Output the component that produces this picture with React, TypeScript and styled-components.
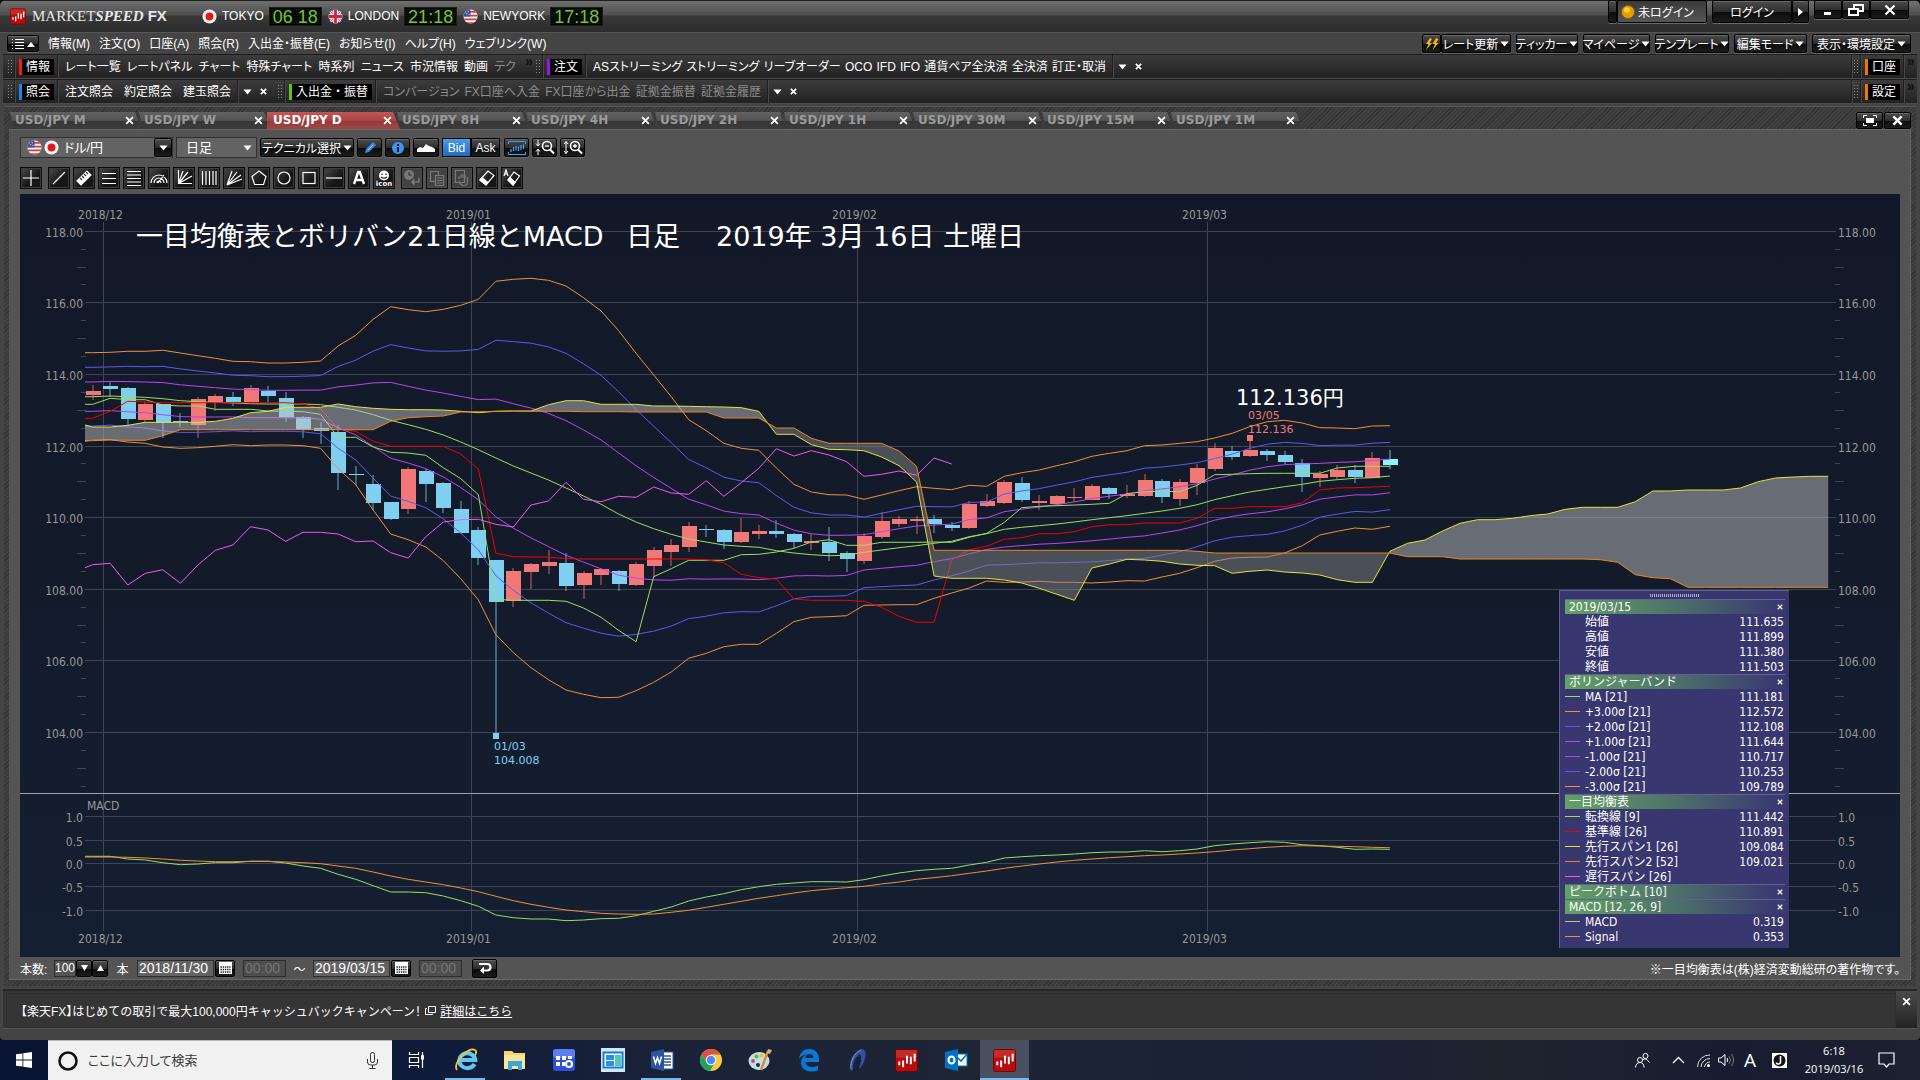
import React from "react";
import styled, { createGlobalStyle, css } from "styled-components";

const uiFont = `"Liberation Sans", "Noto Sans CJK JP", sans-serif`;
const chartFont = `"DejaVu Sans Condensed", "DejaVu Sans", "Noto Sans CJK JP", sans-serif`;
const titleFont = `"DejaVu Sans", "Noto Sans CJK JP", sans-serif`;

const GlobalStyle = createGlobalStyle`
  * { box-sizing: border-box; }
  html, body { margin: 0; padding: 0; background: #000; }
  body, button, input, select { font-family: ${uiFont}; font-size: 12px; color: #fff; }
  body { font-feature-settings: "palt"; }
  button, input, select { font-feature-settings: inherit; margin: 0; padding: 0; }
  svg { display: block; flex: none; }
`;

/* ---------- shared parts ---------- */

const hatch = css`
  background: repeating-linear-gradient(135deg, #343434 0 1px, #404040 1px 3px);
`;

const gloss = css`
  border: 1px solid #000;
  border-radius: 2px;
  background: linear-gradient(#4c4c4c 0, #2e2e2e 50%, #0c0c0c 54%, #1c1c1c 100%);
  box-shadow: 0 1px 0 #6a6a6a, inset 0 1px 0 #686868;
  color: #fff;
`;

const GlossButton = styled.button<{ $w?: number; $h?: number }>`
  ${gloss}
  display: flex;
  align-items: center;
  justify-content: center;
  gap: 2px;
  height: ${(p) => p.$h ?? 19}px;
  width: ${(p) => (p.$w ? `${p.$w}px` : "auto")};
  white-space: nowrap;
  flex: none;
`;

const PlainButton = styled.button<{ $dim?: boolean }>`
  border: 0;
  background: none;
  color: ${(p) => (p.$dim ? "#8e8e8e" : "#fff")};
  white-space: nowrap;
  line-height: 16px;
  flex: none;
`;

const Down = ({ c = "#fff" }: { c?: string }) => (
  <svg width="9" height="6" viewBox="0 0 9 6"><path d="M0.5 0.5h8L4.500 5.500z" fill={c} /></svg>
);
const Cross = ({ s = 8, w = 2 }: { s?: number; w?: number }) => (
  <svg width={s} height={s} viewBox="0 0 8 8"><path d="M1 1l6 6M7 1l-6 6" stroke="#fff" strokeWidth={w} /></svg>
);

const JapanFlag = ({ s = 15 }: { s?: number }) => (
  <svg width={s} height={s} viewBox="0 0 16 16">
    <circle cx="8" cy="8" r="7.500" fill="#f1f1f1" />
    <circle cx="8" cy="8" r="4.200" fill="#dc1c1c" />
  </svg>
);
const UkFlag = () => (
  <svg width="15" height="15" viewBox="0 0 16 16">
    <clipPath id="uk"><circle cx="8" cy="8" r="7.500" /></clipPath>
    <g clipPath="url(#uk)">
      <rect width="16" height="16" fill="#3a4d9a" />
      <path d="M0 0l16 16M16 0L0 16" stroke="#fff" strokeWidth="3" />
      <path d="M0 0l16 16M16 0L0 16" stroke="#d13444" strokeWidth="1" />
      <path d="M8 0v16M0 8h16" stroke="#fff" strokeWidth="5" />
      <path d="M8 0v16M0 8h16" stroke="#cf2334" strokeWidth="3" />
    </g>
  </svg>
);
const UsFlag = ({ s = 15 }: { s?: number }) => (
  <svg width={s} height={s} viewBox="0 0 16 16">
    <clipPath id="us"><circle cx="8" cy="8" r="7.500" /></clipPath>
    <g clipPath="url(#us)">
      <rect width="16" height="16" fill="#f2f2f2" />
      <path d="M0 3h16M0 7h16M0 11h16M0 15h16" stroke="#d0404a" strokeWidth="2" />
      <rect width="8" height="8" fill="#3a549c" />
      <path d="M2 3h1M5 3h1M3.500 5h1M6 6h1" stroke="#fff" strokeWidth="1" />
    </g>
  </svg>
);
const ChartLogo = ({ w = 16, h = 16 }: { w?: number; h?: number }) => (
  <svg width={w} height={h} viewBox="0 0 24 24">
    <rect x="0.500" y="0.500" width="23" height="23" rx="2" fill="#b50d0d" stroke="#6b0505" />
    <rect x="1" y="1" width="22" height="8" rx="1" fill="#c62a26" />
    <path d="M4.500 13v4M8.500 12v7M12.500 7v8M16.500 8v8M20.500 5v8" stroke="#fff" strokeWidth="2" />
  </svg>
);

/* ---------- application frame ---------- */

const Page = styled.div`
  display: flex;
  flex-direction: column;
  min-height: 100vh;
`;
const AppWindow = styled.div`
  display: flex;
  flex-direction: column;
  flex: 1;
  background: #444;
  border-radius: 6px 6px 4px 4px;
  overflow: hidden;
`;
const TitleBar = styled.header`
  display: flex;
  align-items: flex-start;
  justify-content: space-between;
  height: 32px;
  padding: 0 11px 0 10px;
  background: linear-gradient(#1e1e1e 0 1px, #707070 1px, #4e4e4e 15px, #383838 16px, #2c2c2c 32px);
`;
const Brand = styled.div`
  display: flex;
  align-items: center;
  height: 32px;
  gap: 6px;
`;
const BrandName = styled.h1`
  margin: 0 26px 0 0;
  width: 138px;
  font: 15px "Liberation Serif", serif;
  color: #e8e8e8;
  white-space: nowrap;
  i { font-weight: bold; }
  b { font-family: "Liberation Sans", sans-serif; margin-left: 4px; }
`;
const City = styled.span`
  display: flex;
  align-items: center;
  gap: 5px;
`;
const Clock = styled.time`
  width: 53px;
  height: 19px;
  font-size: 18px;
  line-height: 18px;
  text-align: center;
  color: #74c43c;
  white-space: pre;
  border: 1px solid #1b1b1b;
  background: repeating-linear-gradient(#000 0 1px, #0d150a 1px 2px);
`;
const TitleActions = styled.div`
  display: flex;
  align-items: flex-start;
`;
const Split = styled.div<{ $ml?: number }>`
  display: flex;
  margin-left: ${(p) => p.$ml ?? 0}px;
`;
const StatusButton = styled(GlossButton)`
  background: linear-gradient(#3a3a3a, #555);
  box-shadow: 0 1px 0 #6a6a6a;
  gap: 3px;
  justify-content: flex-start;
  padding-left: 3px;
`;

const MenuBar = styled.nav`
  display: flex;
  align-items: center;
  justify-content: space-between;
  height: 22px;
  padding: 0 9px 0 7px;
  background: #444;
  border-top: 1px solid #555;
`;
const MenuGroup = styled.div<{ $gap: number }>`
  display: flex;
  align-items: center;
  gap: ${(p) => p.$gap}px;
`;

const ToolbarRow = styled.div`
  display: flex;
  align-items: center;
  height: 25px;
  margin: 0 3px;
  padding-left: 4px;
  border-top: 1px solid #1c1c1c;
  border-bottom: 1px solid #4a4a4a;
  background: linear-gradient(#3c3c3c, #222);
`;
const Grip = styled.span`
  width: 6px;
  height: 15px;
  margin-right: 2px;
  background: radial-gradient(circle, #8a8a8a 1px, transparent 1px) 0 0 / 3px 3px;
`;
const Category = styled.button<{ $c: string }>`
  height: 16px;
  margin: 0 4px 0 3px;
  padding: 0 4px;
  border: 0;
  border-left: 3px solid ${(p) => p.$c};
  background: #000;
  font-feature-settings: normal;
  line-height: 16px;
  white-space: nowrap;
`;
const Rule = styled.span`
  width: 1px;
  height: 23px;
  background: #484848;
  box-shadow: -1px 0 0 #1e1e1e;
  flex: none;
`;
const ToolLinks = styled.div<{ $w: number }>`
  display: flex;
  justify-content: space-between;
  width: ${(p) => p.$w}px;
  margin: 0 7px 0 6px;
`;
const More = styled.button`
  align-self: flex-start;
  border: 0;
  background: none;
  color: #111;
  font-size: 14px;
  font-weight: bold;
  line-height: 12px;
  width: 12px;
`;
const RowEnd = styled.div`
  display: flex;
  align-items: center;
  margin-left: auto;
`;
const Closer = styled.div`
  display: flex;
  align-items: center;
  gap: 8px;
  padding: 0 10px 0 4px;
`;
const IconOnly = styled.button`
  display: flex;
  align-items: center;
  justify-content: center;
  border: 0;
  background: none;
`;

const Workspace = styled.main`
  display: flex;
  flex-direction: column;
  flex: 1;
  margin: 2px 4px 0;
  padding: 5px 5px 6px;
  border-top: 1px solid #585858;
  ${hatch}
`;
const TabStrip = styled.div`
  display: flex;
  height: 17px;
`;
const Tab = styled.div<{ $active?: boolean }>`
  display: flex;
  align-items: center;
  justify-content: space-between;
  width: 133px;
  margin-right: -4px;
  padding: 0 8px 0 6px;
  z-index: ${(p) => (p.$active ? 1 : 0)};
  color: ${(p) => (p.$active ? "#fff" : "#9a9a9a")};
  background: ${(p) =>
    p.$active
      ? "linear-gradient(#c45656, #a94444 50%, #913a3a 52%, #a04848)"
      : "linear-gradient(#626262, #505050 52%, #363636 54%, #3c3c3c)"};
  clip-path: ${(p) =>
    p.$active
      ? "polygon(0 0, calc(100% - 7px) 0, 100% 100%, 0 100%)"
      : "polygon(1px 0, calc(100% - 7px) 0, calc(100% - 1px) 100%, 5px 100%)"};
`;
const TabName = styled.button`
  border: 0;
  background: none;
  color: inherit;
  font: bold 12px "DejaVu Sans", sans-serif;
  line-height: 17px;
  white-space: nowrap;
`;
const TabActions = styled.div`
  display: flex;
  gap: 1px;
  margin-left: auto;
`;

const Panel = styled.section`
  display: flex;
  flex-direction: column;
  flex: 1;
  padding: 7px 10px 0 11px;
  background: #545454;
  border: 1px solid #686868;
  border-width: 1px 1px 1px 0;
`;
const ControlRow = styled.div`
  display: flex;
  align-items: center;
  gap: 3px;
  height: 21px;
`;
const Combo = styled.label<{ $w: number }>`
  display: flex;
  align-items: center;
  width: ${(p) => p.$w}px;
  height: 21px;
  padding-left: 6px;
  gap: 2px;
  border: 1px solid #303030;
  background: #636363;
`;
const Select = styled.select`
  appearance: none;
  flex: 1;
  min-width: 0;
  padding-left: 3px;
  border: 0;
  background: transparent;
  font-size: 13px;
`;
const ArrowBox = styled.span<{ $solid?: boolean }>`
  display: flex;
  align-items: center;
  justify-content: center;
  width: 18px;
  height: 19px;
  pointer-events: none;
  ${(p) => p.$solid && gloss}
`;
const Toggle = styled.div`
  display: flex;
  margin-right: 1px;
`;
const ToggleButton = styled(GlossButton)<{ $on?: boolean }>`
  border-radius: 0;
  ${(p) => p.$on && css`background: linear-gradient(#4a9ae8, #1c6cc4); box-shadow: 0 1px 0 #6a6a6a;`}
`;
const ToolRow = styled.div`
  display: flex;
  gap: 3px;
  height: 22px;
  margin: 9px 0 5px;
`;
const ToolButton = styled.button<{ $gap?: boolean; $off?: boolean }>`
  display: flex;
  align-items: center;
  justify-content: center;
  width: 22px;
  height: 22px;
  margin-right: ${(p) => (p.$gap ? 3 : 0)}px;
  border: 1px solid #0a0a0a;
  background: ${(p) => (p.$off ? "#424242" : "linear-gradient(135deg, #4a4a4a, #161616 60%)")};
  box-shadow: inset 0 0 0 1px ${(p) => (p.$off ? "#4c4c4c" : "#3c3c3c")};
`;

const ChartArea = styled.div`
  position: relative;
  flex: 1;
  background: linear-gradient(#121827, #131b2b 50%, #141f31);
`;
const ChartSvg = styled.svg`
  width: 100%;
  height: auto;
`;
const FooterRow = styled.div`
  display: flex;
  align-items: center;
  height: 22px;
  color: #fff;
`;
const Field = styled.input<{ $w: number; $off?: boolean; $mr?: number }>`
  width: ${(p) => p.$w}px;
  height: 17px;
  margin-right: ${(p) => p.$mr ?? 0}px;
  padding: 0 1px;
  border: 1px solid #2e2e2e;
  background: ${(p) => (p.$off ? "#4e4e4e" : "#626262")};
  color: ${(p) => (p.$off ? "#757575" : "#fff")};
  font-size: 14px;
`;
const CountField = styled(Field)`
  padding: 0;
  font-size: 12px;
  background: #545454;
`;
const Note = styled.p`
  margin: 0 0 0 auto;
  white-space: nowrap;
`;
const Gap = styled.span<{ $w: number }>`
  display: flex;
  justify-content: center;
  width: ${(p) => p.$w}px;
`;
const CountLabel = styled.label`
  width: 34px;
`;

const NewsBar = styled.footer`
  display: flex;
  height: 40px;
  margin: 3px 3px 11px;
  border-top: 2px solid #262626;
  border-bottom: 1px solid #555;
  background: #353535;
`;
const NewsText = styled.p`
  display: flex;
  align-items: center;
  flex: 1;
  margin: 2px 0 0 3px;
  padding: 0 14px;
  gap: 4px;
  border: 1px solid #303030;
  font-feature-settings: "halt";
  a { color: #fff; }
`;
const NewsClose = styled.div`
  width: 21px;
  padding: 6px 0 0 6px;
  background: linear-gradient(#4a4a4a, #222);
`;

/* ---------- chart data ---------- */

const BAR0 = 92.7;
const STEP = 17.53;
const bx = (i: number) => +(BAR0 + STEP * i).toFixed(1);
const priceY = (p: number) => Math.round(446.5 + (112 - p) * 35.8) - 0.5;
const macdY = (m: number) => Math.round(864 - m * 46.7) - 0.5;
/* stored points count thirds of a pixel below the top of each plot */
const mainY = (v: number) => 190 + v / 3;
const subY = (v: number) => 540 + v / 3;

/* u = up, d = down, n = newest; then high, body top, body bottom, low */
const candles = `u385,391,395,400 d381,386,389,397 d387,388,419,425 u402,404,420,422 d404,404,423,438 d413,421,422,427
u397,399,425,438 u394,396,402,411 d392,397,402,406 u385,388,402,402 d386,391,396,402 d392,398,417,422 d416,417,430,438
d422,428,431,444 d425,432,473,490 d466,474,475,485 d475,484,503,510 d502,502,519,520 u467,469,509,514 d469,471,484,502
d482,483,508,513 d501,509,533,534 d527,530,558,565 d560,560,602,735 u568,571,601,607 u563,564,572,589 u550,562,566,574
d553,563,586,591 u571,573,585,599 u568,569,575,585 d570,571,584,591 u562,564,585,586 u547,550,566,577 u539,545,552,566
u522,526,547,552 d525,529,530,537 d529,530,542,549 u518,532,542,543 u525,531,534,539 d520,531,534,538 d533,534,542,548
u534,541,543,550 d527,542,553,561 d551,553,559,572 u533,536,561,564 u512,521,537,539 u516,519,524,527 u516,519,521,534
d515,519,524,533 d522,525,528,531 u501,504,528,529 u494,501,506,507 u480,482,503,504 d477,483,500,502 u495,501,503,510
u495,496,504,505 u488,497,498,502 u484,486,500,500 d487,488,494,499 u485,494,496,498 u474,480,496,497 d479,481,497,503
u479,482,499,506 u464,468,483,495 u443,448,469,471 d446,451,457,460 u438,450,456,457 d449,451,455,461 d451,455,462,464
d459,463,477,492 u471,474,478,487 u465,470,477,479 d465,470,477,483 u452,458,478,478 n450,459,465,469`
  .split(/\s+/)
  .map((s) => ({ kind: s[0], v: s.slice(1).split(",").map(Number) }));
const candleColor: Record<string, string> = { u: "#f27878", d: "#7fd0f0", n: "#8af8fa" };

/* "v*n" repeats a value n times */
const series = (s: string) =>
  s.trim().split(/\s+/).flatMap((t) => {
    const [v, n] = t.split("*").map(Number);
    return Array<number>(n || 1).fill(v);
  });

const upper3 = series(`488 487 484 484 481 489 497 505 514 515 519 519 517 513 468 436 388 350 359 365 358 346 328 274 268 265
271 288 323 363 422 490 555 620 689 722 760 775 781 834 883 906 914 915 928 915 902 890 895 899 886 889 859 848 840 827 815
799 790 782 767 765 760 755 744 730 710 695 691 699 713 714 716 708 707`);
const ma21 = series(`620 618 620 622 626 632 635 637 639 641 642 642 642 644 652 660 674 691 704 718 735 756 779 804 828 849
870 894 918 943 972 996 1016 1033 1047 1056 1065 1069 1072 1082 1089 1094 1097 1096 1087 1080 1073 1067 1060 1054 1040 1031
1018 1012 1007 1002 996 989 983 977 970 963 955 944 929 917 906 898 890 883 874 869 865 863 858`);
const band = (k: number) => ma21.map((m, i) => m + ((upper3[i] - m) * k) / 3);

const tenkan = series(`643 625 629 629 645 648 648 658 658 658 663 664 665 673 742 742 771 787 789 796 833 866 914 1228 1231 1231
1231 1234 1254 1282 1321 1355 1160 1136 1111 1111 1111 1094 1093 1086 1075 1056 1049 1066 1066 1057 1057 1057 1056 1057 1042
1030 997 953 949 947 945 943 940 911 905 904 905 886 854 853 851 850 850 850 850 834 829 829 829`);
const kijun = series(`685 664 634 636 638*8 642 656 717 724 754 769 769 769 769 792 838 1090 1100 1101 1101 1106 1107*7 1109
1118 1153 1163 1167 1227 1231 1231 1231 1234 1252 1279 1297 1297 1110 1079 1069 1048 1043 1031 1031 1025 1010 1004 1004 999
999 999 985 955 955 950 950 950 938 900 894 893 891 889`);
const chikou = series(`1124 1120 1185 1150 1139 1180 1125 1081 1065 1010 1020 1054 1027 1027 1032 1055 1053 1088 1104 1040 996
989 988 1003 1011 945 933 877 928 935 919 922 891 909 913 872 919 878 835 776 798 782 795 815 859 853 843 856 804 822`);
const span1 = series(`711 711 706 697 697 697 697 694 685 668 664 652 652 652 642 650 655 658 659 659 660 664 668 664 663 663
644 632 632 643 643 643 648 648 649 650 651 653 664 733 733 764 778 779 782 801 827 876 1158 1165 1165 1165 1170 1179 1195
1213 1231 1134 1122 1108 1110 1114 1122 1126 1127 1150 1144 1140 1146 1149 1155 1169 1177 1177 1084 1060 1050 1023 1000 989
989 985 977 972 958 952 952 952 935 903 903 900 900 900 894 875 864 861 859 859`);
const span2 = series(`750 750 751 751 737 719*12 694 683 680 678 666 665 664 663 664*3 665*3 666*5 684 684 684 714 714 745
760*4 783 829 1081*15 1084 1089*11 1100*3 1107*8 1109 1117 1154 1163 1166 1192*9`);

const macd = series(`949 949 957 960 968 974 972 968 968 964 964 969 978 985 1003 1018 1037 1056 1056 1058 1068 1082 1099 1125
1133 1137 1137 1142 1140 1136 1135 1127 1114 1101 1083 1071 1061 1049 1040 1033 1029 1025 1025 1026 1019 1008 999 992 988 985
975 967 954 950 947 945 942 938 936 936 932 935 932 927 917 912 908 905 907 914 917 922 928 927 928`);
const signal = series(`951 951 952 954 957 961 963 965 965 964 964 966 968 971 978 985 996 1008 1018 1026 1034 1044 1055 1069
1082 1093 1102 1110 1115 1120 1122 1123 1122 1117 1111 1102 1093 1084 1075 1067 1059 1052 1047 1043 1039 1032 1026 1018 1013
1007 1000 993 985 978 972 966 961 957 953 950 947 945 942 939 935 930 926 922 919 917 918 919 920 922 923`);

const toPoints = (s: number[], y: (v: number) => number, lead = s[0]) =>
  [`85,${y(lead).toFixed(1)}`, ...s.map((v, i) => `${bx(i)},${y(v).toFixed(1)}`)].join(" ");
const cloud = (from: number, to: number) => {
  const idx = Array.from({ length: to - from + 1 }, (_, k) => from + k);
  const p = (i: number, s: number[]) => `${bx(i)},${mainY(s[i]).toFixed(1)}`;
  return [...idx.map((i) => p(i, span1)), ...idx.reverse().map((i) => p(i, span2))];
};
const crossing = `${bx(38.5)},${mainY(699).toFixed(1)}`;

const c = {
  green: "#9ade62", orange: "#f09038", blue: "#5a5af0", purple: "#b846f0",
  red: "#f00000", yellow: "#e2e23c", span: "#e8861e", pink: "#ee5aee",
};
const Line = styled.polyline<{ $c: string }>`
  fill: none;
  stroke: ${(p) => p.$c};
  stroke-width: 1;
`;
const AxisText = styled.text`
  font: 12px ${chartFont};
  fill: #989898;
`;
const Mark = styled.text<{ $c: string }>`
  font: 11px "DejaVu Sans", sans-serif;
  fill: ${(p) => p.$c};
`;
const Headline = styled.text<{ $s: number }>`
  font: ${(p) => p.$s}px ${titleFont};
  fill: #fff;
  font-feature-settings: normal;
`;

const months = [
  { x: 103.5, label: "2018/12" },
  { x: 471.5, label: "2019/01" },
  { x: 857.5, label: "2019/02" },
  { x: 1207.5, label: "2019/03" },
];
const prices = [118, 116, 114, 112, 110, 108, 106, 104];
const ticks = Array.from({ length: 31 }, (_, i) => 117.5 - i * 0.5).filter((p) => p % 2 !== 0);
const levels = [1, 0.5, 0, -0.5, -1];

function PriceChart() {
  return (
    <ChartSvg viewBox="20 194 1880 763" role="img" aria-label="USD/JPY">
      <g stroke="#3e4454" strokeWidth="1">
        {prices.map((p) => <line key={p} x1="85" x2="1836" y1={priceY(p)} y2={priceY(p)} />)}
        {levels.map((m) => <line key={m} x1="85" x2="1836" y1={macdY(m)} y2={macdY(m)} />)}
        {months.map((m) => <line key={m.x} x1={m.x} x2={m.x} y1="222" y2="931" />)}
        {ticks.map((p) => {
          const len = p % 1 === 0 ? 9 : 5;
          return <path key={p} d={`M${86 - len} ${priceY(p)}h${len}M1835 ${priceY(p)}h${len}`} />;
        })}
      </g>
      <line x1="20" x2="1900" y1="793.5" y2="793.5" stroke="#a0a0a6" />
      {prices.map((p) => (
        <g key={p}>
          <AxisText x="83" y={priceY(p) + 5} textAnchor="end">{p.toFixed(2)}</AxisText>
          <AxisText x="1838" y={priceY(p) + 5}>{p.toFixed(2)}</AxisText>
        </g>
      ))}
      {levels.map((m) => (
        <g key={m}>
          <AxisText x="83" y={macdY(m) + 5} textAnchor="end">{m.toFixed(1)}</AxisText>
          <AxisText x="1838" y={macdY(m) + 5}>{m.toFixed(1)}</AxisText>
        </g>
      ))}
      <AxisText x="87" y="810">MACD</AxisText>
      {months.map((m) => (
        <g key={m.x}>
          <AxisText x={m.x - 3} y="219" textAnchor="middle">{m.label}</AxisText>
          <AxisText x={m.x - 3} y="943" textAnchor="middle">{m.label}</AxisText>
        </g>
      ))}

      {candles.map(({ kind, v: [h, t, b, l] }, i) => (
        <g key={i} fill={candleColor[kind]}>
          <rect x={Math.round(bx(i)) - 0.5} y={h} width="1" height={l - h} opacity="0.8" />
          <rect x={Math.round(bx(i)) - 7} y={t} width="15" height={Math.max(b - t, 1)} />
        </g>
      ))}
      <rect x="493" y="733" width="6" height="6" fill={candleColor.d} />
      <rect x="1247" y="435" width="6" height="6" fill={candleColor.u} />

      <Line $c={c.green} points={toPoints(ma21, mainY)} />
      {[3, -3].map((k) => <Line key={k} $c={c.orange} points={toPoints(band(k), mainY)} />)}
      {[2, -2].map((k) => <Line key={k} $c={c.blue} points={toPoints(band(k), mainY)} />)}
      {[1, -1].map((k) => <Line key={k} $c={c.purple} points={toPoints(band(k), mainY)} />)}
      <Line $c={c.green} points={toPoints(tenkan, mainY)} />
      <Line $c={c.red} points={toPoints(kijun, mainY)} />

      <polygon points={[`85,${mainY(705)}`, ...cloud(0, 38).slice(0, 39), crossing, ...cloud(0, 38).slice(39), `85,${mainY(754)}`].join(" ")} fill="rgba(190,190,190,0.5)" />
      <polygon points={[crossing, ...cloud(39, 74)].join(" ")} fill="rgba(132,132,132,0.5)" />
      <polygon points={cloud(74, 99).join(" ")} fill="rgba(190,190,190,0.5)" />
      <Line $c={c.yellow} points={toPoints(span1, mainY, 705)} />
      <Line $c={c.span} points={toPoints(span2, mainY, 754)} />
      <Line $c={c.pink} points={toPoints(chikou, mainY, 1133)} />

      <Line $c={c.green} points={toPoints(macd, subY)} />
      <Line $c={c.orange} points={toPoints(signal, subY)} />

      <Mark $c={candleColor.d} x="494" y="750">01/03</Mark>
      <Mark $c={candleColor.d} x="494" y="764">104.008</Mark>
      <Mark $c={candleColor.u} x="1248" y="419">03/05</Mark>
      <Mark $c={candleColor.u} x="1248" y="433">112.136</Mark>
      <Headline $s={27} x="136" y="246">一目均衡表とボリバン21日線とMACD</Headline>
      <Headline $s={27} x="626" y="246">日足</Headline>
      <Headline $s={27} x="716" y="246">2019年 3月 16日 土曜日</Headline>
      <Headline $s={21} x="1236" y="405">112.136円</Headline>
    </ChartSvg>
  );
}

/* ---------- value window over the chart ---------- */

const ValueBox = styled.aside`
  position: absolute;
  right: 111px;
  bottom: 9px;
  width: 230px;
  padding: 7px 4px 4px 5px;
  border: 1px solid #5e5c94;
  border-width: 1px 0 0 1px;
  background: rgba(58, 56, 114, 0.97);
`;
const Handle = styled.div`
  width: 50px;
  height: 3px;
  margin: -4px auto 2px;
  background: repeating-linear-gradient(90deg, #b0b0cc 0 1px, transparent 1px 2px);
`;
const ValueTable = styled.table`
  width: 100%;
  border-collapse: collapse;
  font: 12px ${chartFont};
  color: #fff;
  tr { height: 15px; }
  td, th { padding: 0; line-height: 14px; height: 15px; white-space: nowrap; font-weight: normal; text-align: left; }
`;
const HeadRow = styled.tr`
  background: linear-gradient(90deg, #62a264, #4f7768 45%, #3a3a72 95%);
  box-shadow: inset 0 1px 0 #626090;
  && th { padding-left: 4px; }
`;
const CloseSection = styled(IconOnly)`
  margin: 0 1px 0 auto;
`;
const SwatchCell = styled.td<{ $c: string }>`
  width: 15px;
  background: linear-gradient(${(p) => p.$c}, ${(p) => p.$c}) 0 7px / 15px 1px no-repeat;
`;
const NameCell = styled.td`
  && { padding-left: 5px; }
`;
const NumberCell = styled.td`
  && { text-align: right; padding-right: 1px; }
`;

type Row = [string, string, string];
const groups: { title: string; rows: Row[] }[] = [
  { title: "2019/03/15", rows: [["", "始値", "111.635"], ["", "高値", "111.899"], ["", "安値", "111.380"], ["", "終値", "111.503"]] },
  {
    title: "ボリンジャーバンド",
    rows: [
      [c.green, "MA [21]", "111.181"], [c.orange, "+3.00σ [21]", "112.572"], [c.blue, "+2.00σ [21]", "112.108"],
      [c.purple, "+1.00σ [21]", "111.644"], [c.purple, "-1.00σ [21]", "110.717"], [c.blue, "-2.00σ [21]", "110.253"],
      [c.orange, "-3.00σ [21]", "109.789"],
    ],
  },
  {
    title: "一目均衡表",
    rows: [
      [c.green, "転換線 [9]", "111.442"], [c.red, "基準線 [26]", "110.891"], [c.yellow, "先行スパン1 [26]", "109.084"],
      [c.span, "先行スパン2 [52]", "109.021"], [c.pink, "遅行スパン [26]", ""],
    ],
  },
  { title: "ピークボトム [10]", rows: [] },
  { title: "MACD [12, 26, 9]", rows: [[c.green, "MACD", "0.319"], [c.orange, "Signal", "0.353"]] },
];

function Values() {
  return (
    <ValueBox>
      <Handle />
      <ValueTable>
        {groups.map((g) => (
          <tbody key={g.title}>
            <HeadRow>
              <th colSpan={2}>{g.title}</th>
              <NumberCell><CloseSection aria-label="閉じる"><Cross s={6} w={1.6} /></CloseSection></NumberCell>
            </HeadRow>
            {g.rows.map(([color, name, value]) => (
              <tr key={name}>
                <SwatchCell $c={color || "transparent"} />
                <NameCell>{name}</NameCell>
                <NumberCell>{value}</NumberCell>
              </tr>
            ))}
          </tbody>
        ))}
      </ValueTable>
    </ValueBox>
  );
}

/* ---------- drawing tools ---------- */

const toolIcons: [string, React.ReactNode][] = [
  ["十字", <path d="M9 1v16M1 9h16" />],
  ["直線", <path d="M3 15L15 3" />],
  ["定規", <g><path d="M2 12L12 2l4 4L6 16z" fill="#fff" /><path d="M5 9l2 2M7 7l2 2M9 5l2 2M11 3l2 2" stroke="#333" /></g>],
  ["三本線", <path d="M2 4.500h14M2 9.500h14M2 14.500h14" />],
  ["五本線", <path d="M2 2.500h14M2 6h14M2 9.500h14M2 13h14M2 16.500h14" />],
  ["円弧", <path d="M1 14a8 8 0 0 1 16 0M4 14a5 5 0 0 1 10 0M7 14a2 2 0 0 1 4 0M8 14l6-8" />],
  ["ファン", <path d="M3.500 1v13.500H17M3.500 14.500L8 2M3.500 14.500L13 3M3.500 14.500L17 7" />],
  ["縦線", <path d="M2.500 2v14M6 2v14M9.500 2v14M13 2v14M16 2v14" />],
  ["放射", <path d="M2 16L7 2M2 16L12 3M2 16L16 6M2 16L17 10" />],
  ["五角形", <path d="M9 2l7 5.500-2.500 8h-9L2 7.500z" />],
  ["円", <circle cx="9" cy="9" r="6" />],
  ["四角", <rect x="3" y="3.500" width="12" height="11" />],
  ["水平線", <path d="M1 9h16" />],
  ["文字", <path d="M4 15L8.200 3h1.600L14 15M5.500 11h7" strokeWidth="2.400" />],
  ["アイコン", <g><circle cx="9" cy="5.500" r="5" fill="#fff" stroke="none" /><path d="M7 3.500v1.500M11 3.500v1.500M6 7q3 2.500 6 0" stroke="#222" /></g>],
  ["履歴", <g><circle cx="6" cy="6" r="5" fill="#777" stroke="none" /><path d="M6 3v3h3" stroke="#3a3a3a" /><path d="M16 9v4H9M11.500 10.500L9 13l2.500 2.500" stroke="#888" /></g>],
  ["複写", <g stroke="#7a7a7a"><path d="M2.500 2.500h8v10h-8z" /><path d="M7.500 6.500h8v10h-8z" fill="#424242" /><path d="M9 9h5M9 11.500h5M9 14h5" /></g>],
  ["移動", <g stroke="#7a7a7a"><path d="M2.500 1.500h9v12h-9z" /><path d="M6 10V7M8 9V5.500M10 9V5M12 9V5.500M14.500 8v5q0 3.500-4 3.500-3 0-4.500-4.500" /></g>],
  ["消去", <g><path d="M2 11L10 2l6 4.500L8 16z" /><path d="M2 11l6 5 2-2.500-6-5z" fill="#fff" /></g>],
  ["全消去", <g><path d="M5 11l6-8 5.500 4L10 16z" /><path d="M5 11l5 5 2-2.500-5-5z" fill="#fff" /><path d="M1 7l2-6 2 6M2 5h2" /></g>],
];
const IconCaption = styled.span`
  font: bold 7px "DejaVu Sans", sans-serif;
  line-height: 6px;
  color: #fff;
`;
const IconStack = styled.span`
  display: flex;
  flex-direction: column;
  align-items: center;
`;

/* ---------- taskbar ---------- */

const Taskbar = styled.footer`
  display: flex;
  align-items: stretch;
  height: 40px;
  background: linear-gradient(90deg, #0c1638 0, #0e1a3a 20%, #1a2238 35%, #1e2535 50%, #1a2036 70%, #20242f 78%, #181c30 90%, #1c2030 100%);
`;
const Start = styled.button`
  display: flex;
  align-items: center;
  justify-content: center;
  width: 48px;
  border: 0;
  background: #0a1534;
`;
const Search = styled.label`
  display: flex;
  align-items: center;
  width: 344px;
  padding: 0 14px 0 10px;
  gap: 10px;
  background: #f1f1f1;
  border-top: 1px solid #b8b8b8;
`;
const SearchInput = styled.input`
  flex: 1;
  min-width: 0;
  border: 0;
  background: none;
  font-size: 13px;
  &::placeholder { color: #3a3a3a; opacity: 1; }
`;
const TaskButton = styled.button<{ $state?: "open" | "active" }>`
  display: flex;
  align-items: center;
  justify-content: center;
  width: 49px;
  border: 0;
  background: ${(p) =>
    p.$state === "active"
      ? "linear-gradient(#76b9ed, #76b9ed) 0 38px / 49px 2px no-repeat, #4a5060"
      : p.$state === "open"
        ? "linear-gradient(#76b9ed, #76b9ed) 4px 38px / 40px 2px no-repeat"
        : "none"};
`;
const Tray = styled.div`
  display: flex;
  align-items: center;
  margin-left: auto;
  padding-right: 19px;
`;
const TrayIcon = styled.button<{ $w: number }>`
  display: flex;
  align-items: center;
  justify-content: center;
  width: ${(p) => p.$w}px;
  border: 0;
  background: none;
  font: 19px "Open Sans", sans-serif;
`;
const TrayClock = styled.time`
  width: 76px;
  text-align: center;
  font: 11px "Open Sans", sans-serif;
  line-height: 18px;
  color: #fff;
  white-space: pre-line;
`;

const taskIcons: [string, React.ReactNode, ("open" | "active")?][] = [
  ["タスクビュー", <svg width="18" height="18" viewBox="0 0 18 18" fill="none" stroke="#fff"><path d="M1.500 1v2.500h9V1M1.500 17v-2.500h9V17M1.500 6.500h9v5h-9zM14.500 1v16M13 5h3" strokeWidth="1.200" /><rect x="13.500" y="5" width="2" height="3" fill="#fff" /></svg>],
  ["Internet Explorer", <svg width="24" height="24" viewBox="0 0 24 24"><path d="M20.500 16a8 7.500 0 1 1 .8-4H6" fill="none" stroke="#5fc8f4" strokeWidth="4" /><path d="M3 22C-2 16 14-2 21 2c2 1 1 4 0 5" fill="none" stroke="#f3c93a" strokeWidth="1.800" /></svg>, "open"],
  ["エクスプローラー", <svg width="24" height="22" viewBox="0 0 24 22"><path d="M1 2h8l2 2h11v16H1z" fill="#f8d56c" /><path d="M1 6h21v14H1z" fill="#fce49a" /><path d="M5 12h14v9h-4v-4H9v4H5z" fill="#3aa6e0" /></svg>],
  ["設定", <svg width="22" height="22" viewBox="0 0 22 22"><rect width="22" height="22" rx="3" fill="#2c50d8" /><rect width="22" height="9" rx="3" fill="#5c7cf0" /><path d="M3 7h4v4H3zM9 7h4v4H9zM15 7h4v3h-4zM3 13h4v4H3zM9 13h3v4H9z" fill="#fff" /><circle cx="16" cy="15" r="3" fill="none" stroke="#fff" strokeWidth="2" /></svg>],
  ["アプリ", <svg width="24" height="24" viewBox="0 0 24 24"><rect width="24" height="24" fill="#cde8fa" /><rect x="2.500" y="4.500" width="19" height="15" fill="#fff" stroke="#1a7cc8" strokeWidth="2" /><path d="M5 7h8v5H5zM5 13h8v5H5z" fill="#2a8fe0" /><path d="M14 7h6v11h-6z" fill="#4cc8c0" /></svg>],
  ["Word", <svg width="24" height="24" viewBox="0 0 24 24"><rect x="11" y="4" width="12" height="17" fill="#fff" stroke="#2b579a" /><path d="M14 8h7M14 11h7M14 14h7M14 17h7" stroke="#2b579a" strokeWidth="1.300" /><path d="M1 4l13-3v22L1 20z" fill="#2b579a" /><path d="M3.500 8.500l2 7 2-6 2 6 2-7" fill="none" stroke="#fff" strokeWidth="1.500" /></svg>, "open"],
  ["Chrome", <svg width="24" height="24" viewBox="0 0 24 24"><circle cx="12" cy="12" r="11" fill="#f7cb3c" /><path d="M2.500 6.500A11 11 0 0 1 21.500 6.500H12L7.500 14z" fill="#dd5044" /><path d="M2.500 6.500A11 11 0 0 0 11 23l5-8.500-8.500 0z" fill="#1da362" /><circle cx="12" cy="12" r="5.200" fill="#fff" /><circle cx="12" cy="12" r="4.200" fill="#4c8bf5" /></svg>],
  ["ペイント", <svg width="24" height="24" viewBox="0 0 24 24"><ellipse cx="11" cy="13" rx="10.500" ry="9" fill="#bfe0ee" /><circle cx="5" cy="13" r="2" fill="#e04a3c" /><circle cx="8.500" cy="8.500" r="2" fill="#5cb83c" /><circle cx="13.500" cy="7.500" r="2" fill="#f0c030" /><circle cx="10" cy="17" r="2" fill="#20304c" /><path d="M13 22L20 3" stroke="#e08a2c" strokeWidth="2.400" /><path d="M19 5l1-4 4 1-2 4z" fill="#d8b070" /></svg>],
  ["Edge", <svg width="22" height="24" viewBox="0 0 22 24"><path d="M1 11C2 4 6 1 11 1c6 0 10 4 10 10v3H7.500c.4 3.500 3.500 5 7 5 2 0 4-.6 5.500-1.500v4.500c-2 1-4.300 1.500-7 1.500C7 23.500 3 20 3 14.500c0-3.500 2-6.500 5.500-8C4.800 6.800 2.500 8.500 1 11zM7.500 10h8c0-2.500-1.500-4-4-4s-4 1.800-4 4z" fill="#0a78d4" /></svg>],
  ["ツール", <svg width="24" height="24" viewBox="0 0 24 24"><path d="M5 23C2 15 7 3 16 1c6 1 4 11-1 18l-2 2c2-7 3-13 1-15-5 3-8 10-7 16z" fill="#35509e" /><path d="M11 22c0-4 0-8-1-9l3-4 3 5-3-1c1 3 0 6-2 9z" fill="#141e40" /><path d="M5 21C4 14 8 5 15 2" fill="none" stroke="#7a94d4" /></svg>],
  ["MARKETSPEED", <ChartLogo w={23} h={23} />],
  ["Outlook", <svg width="24" height="24" viewBox="0 0 24 24"><rect x="12" y="6" width="11" height="12" fill="#fff" stroke="#0072c6" /><path d="M13 9l4 4 6-7" fill="none" stroke="#0072c6" strokeWidth="1.600" /><path d="M1 4l13-3v22L1 20z" fill="#0072c6" /><ellipse cx="7.500" cy="12" rx="3" ry="3.600" fill="none" stroke="#fff" strokeWidth="2" /></svg>],
  ["MARKETSPEED FX", <ChartLogo w={23} h={23} />, "active"],
];

const Calendar = () => (
  <svg width="13" height="12" viewBox="0 0 13 12"><rect width="13" height="12" fill="#fff" /><path d="M1.500 5h10M1.500 7.500h10M1.500 10h10" stroke="#222" strokeWidth="1.400" strokeDasharray="1.400 0.800" /></svg>
);

const ToolGroup = ({ color, name, w, items, dim = [] }: { color: string; name: string; w: number; items: string[]; dim?: string[] }) => (
  <>
    <Grip />
    <Rule />
    <Category $c={color}>{name}</Category>
    <Rule />
    <ToolLinks $w={w}>
      {items.map((t) => <PlainButton key={t} $dim={dim.includes(t)}>{t}</PlainButton>)}
    </ToolLinks>
  </>
);
const GroupEnd = () => (
  <>
    <Rule />
    <Closer>
      <IconOnly aria-label="一覧"><Down /></IconOnly>
      <IconOnly aria-label="閉じる"><Cross s={7} /></IconOnly>
    </Closer>
  </>
);
const transfer = ["コンバージョン", "FX口座へ入金", "FX口座から出金", "証拠金振替", "証拠金履歴"];

export default function App() {
  return (
    <Page>
      <GlobalStyle />
      <AppWindow>
        <TitleBar>
          <Brand>
            <ChartLogo w={16} h={17} />
            <BrandName>MARKET<i>SPEED</i><b>FX</b></BrandName>
            <City><JapanFlag />TOKYO<Clock>06 18</Clock></City>
            <City><UkFlag />LONDON<Clock>21:18</Clock></City>
            <City><UsFlag />NEWYORK<Clock>17:18</Clock></City>
          </Brand>
          <TitleActions>
            <Split>
              <GlossButton $w={9} $h={23} aria-label="前へ" />
              <StatusButton $w={90} $h={23}>
                <svg width="14" height="14" viewBox="0 0 14 14"><circle cx="7" cy="7" r="6.500" fill="#e8a000" stroke="#7a5a10" /><ellipse cx="6" cy="5" rx="3" ry="2.500" fill="#ffd040" /></svg>
                未ログイン
              </StatusButton>
            </Split>
            <Split $ml={5}>
              <GlossButton $w={80} $h={23}>ログイン</GlossButton>
              <GlossButton $w={17} $h={23} aria-label="次へ"><svg width="5" height="8" viewBox="0 0 5 8"><path d="M0 0l5 4-5 4z" fill="#fff" /></svg></GlossButton>
            </Split>
            <Split $ml={5}>
              <GlossButton $w={28} aria-label="最小化"><svg width="10" height="10" viewBox="0 0 10 10"><path d="M1 7h7v3H1z" fill="#fff" /></svg></GlossButton>
              <GlossButton $w={28} aria-label="元に戻す"><svg width="16" height="12" viewBox="0 0 16 12" fill="none" stroke="#fff" strokeWidth="2"><path d="M6 4V1h9v6h-4M1 5h9v6H1z" /></svg></GlossButton>
              <GlossButton $w={39} aria-label="終了"><Cross s={12} w={1.5} /></GlossButton>
            </Split>
          </TitleActions>
        </TitleBar>

        <MenuBar>
          <MenuGroup $gap={9}>
            <GlossButton $w={32} $h={17} aria-label="メニュー">
              <svg width="25" height="11" viewBox="0 0 25 11"><path d="M1 1.500h1M4 1.500h9M1 4.500h1M4 4.500h9M1 7.500h1M4 7.500h9M1 10.500h1M4 10.500h9" stroke="#fff" /><path d="M16 9h8l-4-5z" fill="#fff" /></svg>
            </GlossButton>
            {["情報(M)", "注文(O)", "口座(A)", "照会(R)", "入出金・振替(E)", "お知らせ(I)", "ヘルプ(H)", "ウェブリンク(W)"].map((t) => (
              <PlainButton key={t}>{t}</PlainButton>
            ))}
          </MenuGroup>
          <MenuGroup $gap={5}>
            <Split>
              <GlossButton $w={19} aria-label="更新"><svg width="14" height="12" viewBox="0 0 14 12"><path d="M5 0L1 6h2.500L1 12l6-7H4.500L7 1zM11 0L7.500 6H10l-2.500 6 6-7H11l2.500-4z" fill="#f0b818" /></svg></GlossButton>
              <GlossButton $w={70}>レート更新<Down /></GlossButton>
            </Split>
            <GlossButton $w={62}>ティッカー<Down /></GlossButton>
            <GlossButton $w={67}>マイページ<Down /></GlossButton>
            <GlossButton $w={74}>テンプレート<Down /></GlossButton>
            <GlossButton $w={73}>編集モード<Down /></GlossButton>
            <GlossButton $w={99}>表示・環境設定<Down /></GlossButton>
          </MenuGroup>
        </MenuBar>

        <ToolbarRow>
          <ToolGroup color="#f0200c" name="情報" w={451} dim={["テク"]}
            items={["レート一覧", "レートパネル", "チャート", "特殊チャート", "時系列", "ニュース", "市況情報", "動画", "テク"]} />
          <More aria-label="続き">»</More>
          <ToolGroup color="#9a14f0" name="注文" w={513}
            items={["ASストリーミング", "ストリーミング", "リーブオーダー", "OCO", "IFD", "IFO", "通貨ペア全決済", "全決済", "訂正・取消"]} />
          <GroupEnd />
          <RowEnd><Rule /><Grip /><Rule /><Category $c="#f07800">口座</Category><Rule /><More aria-label="続き">»</More></RowEnd>
        </ToolbarRow>
        <ToolbarRow>
          <ToolGroup color="#1a84f0" name="照会" w={166} items={["注文照会", "約定照会", "建玉照会"]} />
          <GroupEnd />
          <ToolGroup color="#5ac814" name="入出金・振替" w={378} items={transfer} dim={transfer} />
          <GroupEnd />
          <RowEnd><Rule /><Grip /><Rule /><Category $c="#f07800">設定</Category><Rule /><More aria-label="続き">»</More></RowEnd>
        </ToolbarRow>

        <Workspace>
          <TabStrip>
            {["M", "W", "D", "8H", "4H", "2H", "1H", "30M", "15M", "1M"].map((t) => (
              <Tab key={t} $active={t === "D"}>
                <TabName>USD/JPY {t}</TabName>
                <IconOnly aria-label="閉じる"><Cross s={9} w={1.6} /></IconOnly>
              </Tab>
            ))}
            <TabActions>
              <GlossButton $w={27} $h={17} aria-label="全画面"><svg width="14" height="11" viewBox="0 0 14 11"><path d="M0.500 3V.5H4M10 .5h3.500V3M13.500 8v2.500H10M4 10.500H.5V8" fill="none" stroke="#fff" /><rect x="3" y="3" width="8" height="5" fill="#fff" /></svg></GlossButton>
              <GlossButton $w={27} $h={17} aria-label="閉じる"><Cross s={11} w={1.8} /></GlossButton>
            </TabActions>
          </TabStrip>
          <Panel>
            <ControlRow>
              <Combo $w={153}>
                <UsFlag /><JapanFlag />
                <Select aria-label="通貨ペア"><option>ドル/円</option></Select>
                <ArrowBox $solid><Down /></ArrowBox>
              </Combo>
              <Combo $w={81}>
                <Select aria-label="足種"><option>日足</option></Select>
                <ArrowBox><Down /></ArrowBox>
              </Combo>
              <GlossButton $w={94}>テクニカル選択<Down /></GlossButton>
              <GlossButton $w={25} aria-label="描画"><svg width="14" height="14" viewBox="0 0 14 14"><path d="M2 12l1-4 7-7 3 3-7 7z" fill="#3a8ae0" /><path d="M5 9l5-5" stroke="#9accff" /></svg></GlossButton>
              <GlossButton $w={25} aria-label="情報"><svg width="14" height="14" viewBox="0 0 14 14"><circle cx="7" cy="7" r="6" fill="#3a94ee" /><path d="M7 3v2M7 6v5" stroke="#0a1a30" strokeWidth="2" /></svg></GlossButton>
              <GlossButton $w={26} aria-label="エリア"><svg width="18" height="9" viewBox="0 0 18 9"><path d="M0 9V6l3-2 3 1 3-4 3 2 3 1 3 2v3z" fill="#fff" /></svg></GlossButton>
              <Toggle>
                <ToggleButton $w={29} $on>Bid</ToggleButton>
                <ToggleButton $w={29}>Ask</ToggleButton>
              </Toggle>
              <GlossButton $w={25} aria-label="全体"><svg width="18" height="14" viewBox="0 0 18 14" fill="none" stroke="#4a9cf0"><path d="M.5 3V.5h17V3M.5 11v2.500h17V11" /><path d="M3 11V8M5.500 10V6M8 9.500V5M10.500 10V5.500M13 9V4M15.500 8V3.500" strokeWidth="1.300" /></svg></GlossButton>
              {[false, true].map((plus) => (
                <GlossButton key={String(plus)} $w={25} aria-label={plus ? "拡大" : "縮小"}>
                  <svg width="20" height="15" viewBox="0 0 20 15" fill="none" stroke="#fff">
                    <path d={plus ? "M3 1.500v12M1 4l2-2.500L5 4M1 11l2 2.500L5 11" : "M3 0v5M1 3.500L3 6l2-2.500M3 15v-5M1 11.500L3 9l2 2.500"} />
                    <circle cx="12" cy="6" r="4.500" strokeWidth="1.600" />
                    <path d="M15 9.500l4 4" strokeWidth="2" />
                    <path d={plus ? "M12 4v4M10 6h4" : "M10 6h4"} strokeWidth="1.300" />
                  </svg>
                </GlossButton>
              ))}
            </ControlRow>
            <ToolRow>
              {toolIcons.map(([name, art], i) => (
                <ToolButton key={name} aria-label={name} $gap={i === 0 || i === 14} $off={i > 14 && i < 18}>
                  <IconStack>
                    <svg width={18} height={i === 14 ? 11 : 18} viewBox={i === 14 ? "0 0 18 11" : "0 0 18 18"} fill="none" stroke="#fff" strokeWidth="1.200">{art}</svg>
                    {i === 14 && <IconCaption>icon</IconCaption>}
                  </IconStack>
                </ToolButton>
              ))}
            </ToolRow>
            <ChartArea>
              <PriceChart />
              <Values />
            </ChartArea>
            <FooterRow>
              <CountLabel htmlFor="bars">本数:</CountLabel>
              <CountField id="bars" $w={22} defaultValue="100" />
              <GlossButton $w={16} $h={17} aria-label="減らす"><svg width="7" height="6" viewBox="0 0 7 6"><path d="M0 0h7L3.500 6z" fill="#fff" /></svg></GlossButton>
              <GlossButton $w={16} $h={17} aria-label="増やす"><svg width="7" height="6" viewBox="0 0 7 6"><path d="M0 6h7L3.500 0z" fill="#fff" /></svg></GlossButton>
              <Gap $w={29}>本</Gap>
              <Field aria-label="開始日" $w={77} $mr={1} defaultValue="2018/11/30" />
              <GlossButton $w={20} $h={17} aria-label="開始日を選択"><Calendar /></GlossButton>
              <Gap $w={8} />
              <Field aria-label="開始時刻" $w={43} $off disabled defaultValue="00:00" />
              <Gap $w={27}>～</Gap>
              <Field aria-label="終了日" $w={77} $mr={1} defaultValue="2019/03/15" />
              <GlossButton $w={20} $h={17} aria-label="終了日を選択"><Calendar /></GlossButton>
              <Gap $w={8} />
              <Field aria-label="終了時刻" $w={43} $off disabled defaultValue="00:00" />
              <Gap $w={10} />
              <GlossButton $w={25} aria-label="適用"><svg width="14" height="12" viewBox="0 0 14 12" fill="none" stroke="#fff" strokeWidth="2.200"><path d="M1 2h8q3.500 0 3.500 3.200T9 8.500H4" /><path d="M6 4.500L2 8.500l4 3.500z" fill="#fff" stroke="none" /></svg></GlossButton>
              <Note>※一目均衡表は(株)経済変動総研の著作物です。</Note>
            </FooterRow>
          </Panel>
        </Workspace>

        <NewsBar>
          <NewsText>
            【楽天FX】はじめての取引で最大100,000円キャッシュバックキャンペーン！
            <svg width="11" height="9" viewBox="0 0 11 9" fill="none" stroke="#fff"><path d="M3.500 .5h7v6h-7zM2 2.500H.5v6h7V7.500" /></svg>
            <a href="#detail">詳細はこちら</a>
          </NewsText>
          <NewsClose><IconOnly aria-label="閉じる"><Cross s={9} w={1.6} /></IconOnly></NewsClose>
        </NewsBar>
      </AppWindow>

      <Taskbar>
        <Start aria-label="スタート">
          <svg width="16" height="16" viewBox="0 0 16 16"><path d="M0 2.300l6.500-.9v6.200H0zM7.300 1.300L16 0v7.600H7.300zM0 8.400h6.500v6.200L0 13.700zM7.300 8.400H16V16l-8.700-1.200z" fill="#fff" /></svg>
        </Start>
        <Search>
          <svg width="20" height="20" viewBox="0 0 20 20"><circle cx="10" cy="10" r="8.500" fill="none" stroke="#111" strokeWidth="2.600" /></svg>
          <SearchInput aria-label="検索" placeholder="ここに入力して検索" />
          <svg width="11" height="17" viewBox="0 0 11 17" fill="none" stroke="#333"><rect x="3.500" y=".5" width="4" height="10" rx="2" /><path d="M.5 7v3q0 3 3 3h4q3 0 3-3V7M5.500 13v3.500M2.500 16.500h6" /></svg>
        </Search>
        {taskIcons.map(([name, art, state]) => (
          <TaskButton key={name} aria-label={name} $state={state}>{art}</TaskButton>
        ))}
        <Tray>
          <TrayIcon $w={44} aria-label="連絡先"><svg width="15" height="15" viewBox="0 0 15 15" fill="none" stroke="#fff"><circle cx="10.500" cy="3" r="2.500" /><circle cx="5" cy="7" r="2.500" /><path d="M.5 14.500q.5-5 4.500-5t4 5M7.500 7q3-3 7 2.500" /></svg></TrayIcon>
          <TrayIcon $w={28} aria-label="隠れているアイコン"><svg width="13" height="8" viewBox="0 0 13 8" fill="none" stroke="#fff" strokeWidth="1.300"><path d="M1 7l5.500-5.500L12 7" /></svg></TrayIcon>
          <TrayIcon $w={23} aria-label="ネットワーク"><svg width="13" height="13" viewBox="0 0 13 13" fill="none" stroke="#ddd"><path d="M.5 13A12 12 0 0 1 13 1M4 13a9 9 0 0 1 9-8.500M7.500 13A5.500 5.500 0 0 1 13 8" /><circle cx="11.500" cy="11.500" r="1.500" fill="#fff" stroke="none" /></svg></TrayIcon>
          <TrayIcon $w={23} aria-label="音量"><svg width="17" height="14" viewBox="0 0 17 14" fill="none" stroke="#fff"><path d="M.5 5h2.500L7 1.500v11L3 9H.5z" /><path d="M9 5q1.500 2 0 4" /><path d="M11 3q3 4 0 8M13.500 1q4 6 0 12" stroke="#777" /></svg></TrayIcon>
          <TrayIcon $w={24}>A</TrayIcon>
          <TrayIcon $w={34} aria-label="入力"><svg width="15" height="15" viewBox="0 0 15 15"><rect width="15" height="15" fill="#fff" /><circle cx="7.500" cy="7.500" r="6" fill="#111" /><path d="M8.500 3v6q0 2-2 2t-2-1.500" fill="none" stroke="#fff" strokeWidth="1.600" /></svg></TrayIcon>
          <TrayClock>{"6:18\n2019/03/16"}</TrayClock>
          <TrayIcon $w={29} aria-label="通知"><svg width="17" height="16" viewBox="0 0 17 16" fill="none" stroke="#fff" strokeWidth="1.200"><path d="M1 1h15v11h-5l-2.500 3L6 12H1z" /></svg></TrayIcon>
        </Tray>
      </Taskbar>
    </Page>
  );
}
